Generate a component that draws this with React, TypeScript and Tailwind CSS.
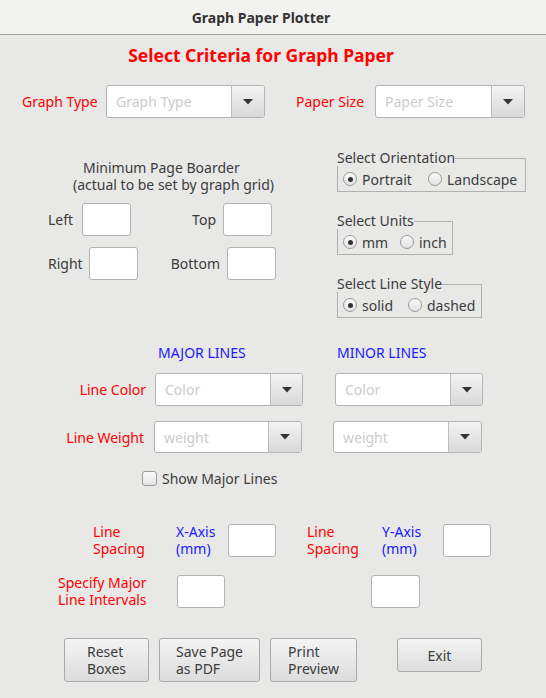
import React from "react";

const font = "font-['Noto_Sans','DejaVu_Sans',sans-serif]";

function Arrow() {
  return (
    <svg width="10" height="6" viewBox="0 0 10 6">
      <polygon points="0,0 10,0 5,5.5" fill="#333" />
    </svg>
  );
}

function Combo({
  placeholder,
  width,
  height = "h-[33px]",
  btn = "w-[33px]",
}: {
  placeholder: string;
  width: string;
  height?: string;
  btn?: string;
}) {
  return (
    <div
      className={`${width} ${height} flex rounded-[3px] border border-[#b3b3b3] bg-white overflow-hidden`}
    >
      <div className="flex-1 flex items-center pl-[9px] text-[#cbcbcb]">
        {placeholder}
      </div>
      <div
        className={`${btn} flex items-center justify-center border-l border-[#bdbdbd] bg-gradient-to-b from-[#f3f3f3] to-[#d9d9d9]`}
      >
        <Arrow />
      </div>
    </div>
  );
}

function Box({ width = "w-[49px]" }: { width?: string }) {
  return (
    <div
      className={`${width} h-[33px] rounded-[3px] border border-[#b3b3b3] bg-white`}
    />
  );
}

function Radio({ label, checked, width }: { label: string; checked?: boolean; width?: string }) {
  return (
    <div className={`flex items-center ${width ?? ""}`}>
      <span className="w-[14px] h-[14px] rounded-full border border-[#9a9a9a] bg-gradient-to-b from-[#fafafa] to-[#e2e2e2] flex items-center justify-center">
        {checked && <span className="w-[5px] h-[5px] rounded-full bg-[#333]" />}
      </span>
      <span className="ml-[5px]">{label}</span>
    </div>
  );
}

function Group({
  title,
  width,
  className = "",
  children,
}: {
  title: string;
  width: string;
  className?: string;
  children: React.ReactNode;
}) {
  return (
    <fieldset className={`${width} ${className} border border-[#b0b0b0] px-0`}>
      <legend className="leading-[16px] -ml-[1px]">{title}</legend>
      <div className="h-[25px] flex items-center pl-[5px] pt-[1px]">{children}</div>
    </fieldset>
  );
}

function Btn({ lines, width, height }: { lines: string[]; width: string; height: string }) {
  return (
    <button
      className={`${width} ${height} flex items-center justify-center rounded-[3px] border border-[#a9a9a9] bg-gradient-to-b from-[#f4f4f4] to-[#dcdcdc] leading-[17px]`}
    >
      <span className="text-left">
        {lines.map((l) => (
          <span key={l} className="block">
            {l}
          </span>
        ))}
      </span>
    </button>
  );
}

export default function App() {
  return (
    <div
      className={`w-[546px] h-[698px] overflow-hidden bg-[#e8e8e7] text-[14px] text-[#3c3c3c] ${font}`}
    >
      <div className="h-[35px] flex items-center justify-center pr-[24px] bg-[#f2f2f1] border-b border-[#9c9c9c] font-bold text-[#333]">
        Graph Paper Plotter
      </div>

      <div className="mt-[10px] pr-[24px] leading-[20px] text-center text-[17.5px] font-bold text-[#ff0000]">
        Select Criteria for Graph Paper
      </div>

      <div className="mt-[20px] flex items-center">
        <div className="ml-[22px] w-[84px] text-[#ff0000]">Graph Type</div>
        <Combo placeholder="Graph Type" width="w-[159px]" />
        <div className="ml-[31px] w-[79px] text-[#ff0000]">Paper Size</div>
        <Combo placeholder="Paper Size" width="w-[150px]" />
      </div>

      <div className="mt-[32px] flex">
        <div className="w-[337px] pt-[9px] leading-[17px]">
          <div className="ml-[83px]">Minimum Page Boarder</div>
          <div className="ml-[73px]">(actual to be set by graph grid)</div>
          <div className="mt-[10px] flex items-center">
            <div className="ml-[48px] w-[34px]">Left</div>
            <Box />
            <div className="w-[92px] pr-[7px] text-right">Top</div>
            <Box />
          </div>
          <div className="mt-[11px] flex items-center">
            <div className="ml-[48px] w-[41px]">Right</div>
            <Box />
            <div className="w-[89px] pr-[7px] text-right">Bottom</div>
            <Box />
          </div>
        </div>

        <div>
          <Group title="Select Orientation" width="w-[189px]">
            <Radio label="Portrait" checked width="w-[85px]" />
            <Radio label="Landscape" />
          </Group>
          <Group title="Select Units" width="w-[116px]" className="mt-[21px]">
            <Radio label="mm" checked width="w-[57px]" />
            <Radio label="inch" />
          </Group>
          <Group title="Select Line Style" width="w-[145px]" className="mt-[21px]">
            <Radio label="solid" checked width="w-[65px]" />
            <Radio label="dashed" />
          </Group>
        </div>
      </div>

      <div className="mt-[26px] flex leading-[17px] text-[#1a1aff]">
        <div className="ml-[158px] w-[179px]">MAJOR LINES</div>
        <div>MINOR LINES</div>
      </div>

      <div className="mt-[12px] flex items-center">
        <div className="w-[146px] text-right text-[#ff0000]">Line Color</div>
        <div className="ml-[9px]">
          <Combo placeholder="Color" width="w-[148px]" btn="w-[32px]" />
        </div>
        <div className="ml-[32px]">
          <Combo placeholder="Color" width="w-[148px]" btn="w-[32px]" />
        </div>
      </div>

      <div className="mt-[15px] flex items-center">
        <div className="w-[144px] text-right text-[#ff0000]">Line Weight</div>
        <div className="ml-[10px]">
          <Combo placeholder="weight" width="w-[148px]" height="h-[32px]" btn="w-[33px]" />
        </div>
        <div className="ml-[31px]">
          <Combo placeholder="weight" width="w-[149px]" height="h-[32px]" btn="w-[33px]" />
        </div>
      </div>

      <div className="mt-[17px] ml-[142px] flex items-center leading-[17px]">
        <span className="w-[15px] h-[15px] rounded-[3px] border border-[#9a9a9a] bg-gradient-to-b from-[#fafafa] to-[#e4e4e4]" />
        <span className="ml-[5px]">Show Major Lines</span>
      </div>

      <div className="mt-[36px] flex items-center leading-[17px]">
        <div className="ml-[93px] w-[83px] text-[#ff0000]">
          Line
          <br />
          Spacing
        </div>
        <div className="w-[52px] text-[#1a1aff]">
          X-Axis
          <br />
          (mm)
        </div>
        <Box width="w-[48px]" />
        <div className="ml-[31px] w-[75px] text-[#ff0000]">
          Line
          <br />
          Spacing
        </div>
        <div className="w-[61px] text-[#1a1aff]">
          Y-Axis
          <br />
          (mm)
        </div>
        <Box width="w-[48px]" />
      </div>

      <div className="mt-[17px] flex items-center leading-[17px]">
        <div className="ml-[58px] w-[119px] text-[#ff0000]">
          Specify Major
          <br />
          Line Intervals
        </div>
        <Box width="w-[48px]" />
        <div className="ml-[146px]">
          <Box />
        </div>
      </div>

      <div className="mt-[30px] ml-[64px] flex items-start gap-[10px]">
        <Btn lines={["Reset", "Boxes"]} width="w-[85px]" height="h-[44px]" />
        <Btn lines={["Save Page", "as PDF"]} width="w-[101px]" height="h-[44px]" />
        <Btn lines={["Print", "Preview"]} width="w-[87px]" height="h-[44px]" />
        <div className="ml-[30px]">
          <Btn lines={["Exit"]} width="w-[85px]" height="h-[34px]" />
        </div>
      </div>
    </div>
  );
}
